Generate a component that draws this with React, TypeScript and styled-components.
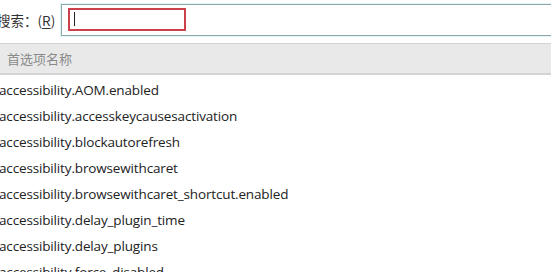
import React from 'react';
import styled, { createGlobalStyle } from 'styled-components';

const GlobalStyle = createGlobalStyle`
  html, body {
    margin: 0;
    padding: 0;
    background: #ffffff;
    overflow: hidden;
  }
  body {
    font-family: 'Open Sans', 'Noto Sans CJK SC', sans-serif;
  }
`;

const Page = styled.div`
  width: 551px;
  height: 272px;
  overflow: hidden;
  background: #fff;
`;

const SearchBar = styled.div`
  display: flex;
  align-items: center;
  height: 32px;
  margin: 4px -6px 0 -3px;
`;

const Label = styled.label`
  font-family: 'Noto Sans CJK SC', sans-serif;
  font-size: 13.5px;
  color: #333;
  margin-right: 6px;
  white-space: nowrap;

  u {
    text-decoration: underline;
    text-underline-offset: 2px;
  }
`;

const InputBox = styled.div`
  flex: 1;
  height: 30px;
  border: 1px solid #8ea7a9;
  box-shadow: 0 0 0 1px #e3f6f8;
  background: #fff;
  display: flex;
  align-items: center;
  padding-left: 6px;
`;

const Highlight = styled.div`
  width: 110px;
  height: 19px;
  border: 2px solid #c9424c;
  display: flex;
  align-items: center;
  padding-left: 4px;
  margin-top: -2px;
`;

const Caret = styled.span`
  width: 1px;
  height: 14px;
  background: #222;
`;

const Header = styled.div`
  margin-top: 7px;
  height: 29px;
  background: #e9e9e9;
  border-top: 1px solid #d2d2d2;
  border-bottom: 2px solid #d4d4d4;
  display: flex;
  align-items: center;
  padding-left: 7px;
  font-family: 'Noto Sans CJK SC', sans-serif;
  font-size: 13px;
  color: #8a8a8a;
`;

const List = styled.div`
  display: flex;
  flex-direction: column;
  padding-top: 2px;
`;

const Row = styled.div`
  height: 26px;
  line-height: 26px;
  margin-left: -1px;
  font-size: 13.5px;
  letter-spacing: -0.15px;
  color: #222;
  white-space: nowrap;
`;

const prefs = [
  'accessibility.AOM.enabled',
  'accessibility.accesskeycausesactivation',
  'accessibility.blockautorefresh',
  'accessibility.browsewithcaret',
  'accessibility.browsewithcaret_shortcut.enabled',
  'accessibility.delay_plugin_time',
  'accessibility.delay_plugins',
  'accessibility.force_disabled',
];

export default function App() {
  return (
    <Page>
      <GlobalStyle />
      <SearchBar>
        <Label>
          搜索：(<u>R</u>)
        </Label>
        <InputBox>
          <Highlight>
            <Caret />
          </Highlight>
        </InputBox>
      </SearchBar>
      <Header>首选项名称</Header>
      <List>
        {prefs.map((p) => (
          <Row key={p}>{p}</Row>
        ))}
      </List>
    </Page>
  );
}
